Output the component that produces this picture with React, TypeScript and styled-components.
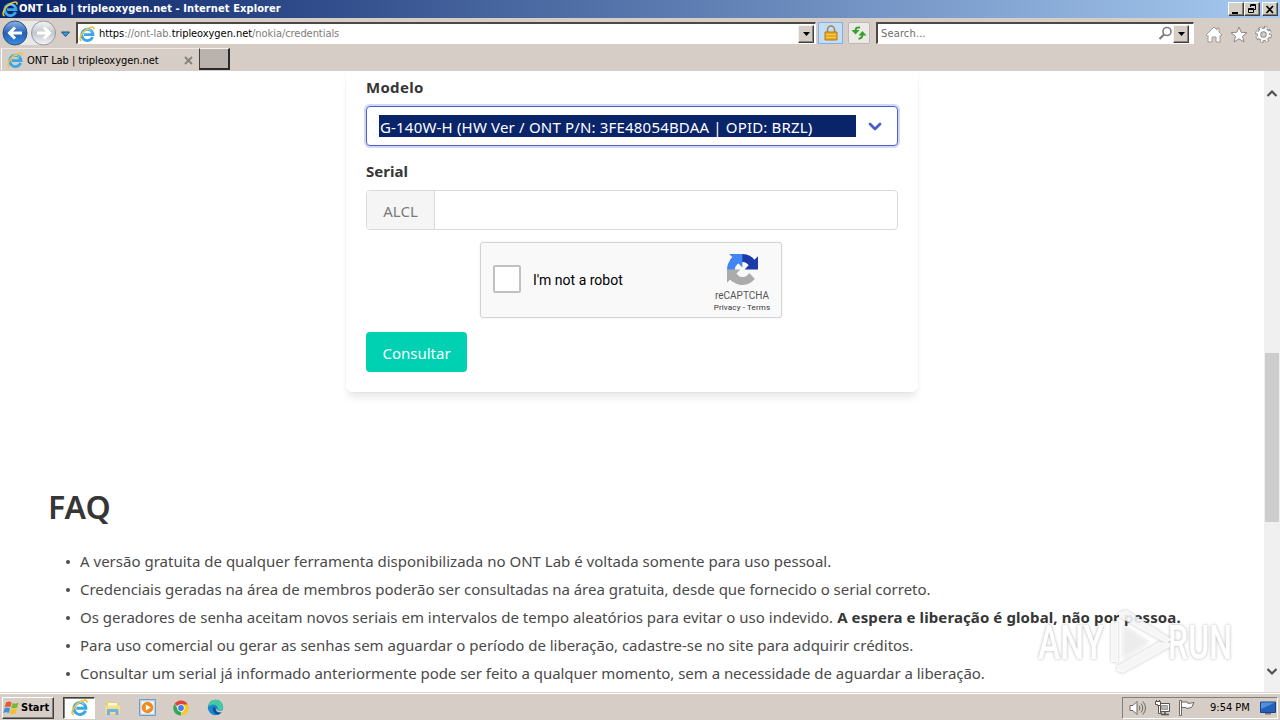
import React from 'react';
import styled, { createGlobalStyle } from 'styled-components';

const ui = '"DejaVu Sans Condensed", "DejaVu Sans", sans-serif';
const face = '#d6cec6';

const Global = createGlobalStyle`
  * { box-sizing: border-box; }
  body { margin: 0; overflow: hidden; background: #fff; }
  button { font: inherit; }
`;

const Screen = styled.div`
  position: relative;
  width: 1280px;
  height: 720px;
  display: flex;
  flex-direction: column;
  overflow: hidden;
  font-family: ${ui};
  font-size: 11px;
  color: #000;
`;

const Spaced = styled.span<{ $ls?: number }>`
  letter-spacing: ${p => p.$ls ?? 0}px;
  white-space: nowrap;
`;

const TitleBar = styled.header`
  flex: none;
  height: 18px;
  display: flex;
  align-items: center;
  padding: 0 2px 0 2px;
  background: linear-gradient(90deg, #0a246a, #a6caf0);
  color: #fff;
  font-weight: 700;
`;

const Title = styled.div`
  flex: 1;
  padding-left: 1px;
  line-height: 18px;
`;

const CaptionButton = styled.button<{ $gap?: number }>`
  width: 16px;
  height: 14px;
  margin: 0 0 0 ${p => p.$gap ?? 0}px;
  padding: 0;
  display: flex;
  align-items: center;
  justify-content: center;
  border: 1px solid;
  border-color: #fff #404040 #404040 #fff;
  box-shadow: inset -1px -1px #808080;
  background: #d4d0c8;
`;

const NavBar = styled.nav`
  flex: none;
  height: 30px;
  display: flex;
  align-items: center;
  padding: 0 8px 0 2px;
  background: ${face};
`;

const AddressBox = styled.div<{ $w: number; $pad: number; $ml?: number; $end?: number }>`
  width: ${p => p.$w}px;
  height: 22px;
  margin-left: ${p => p.$ml ?? 0}px;
  padding: 0 ${p => p.$end ?? 1}px 0 ${p => p.$pad}px;
  display: flex;
  align-items: center;
  border: solid #fff;
  border-width: 2px 1px 1px 2px;
  border-top-color: #4e4842;
  border-left-color: #4e4842;
  background: #fff;
`;

const Url = styled.div`
  flex: 1;
  padding-left: 4px;
  color: #7c7c7c;
  b { font-weight: 400; color: #000; }
`;

const DropButton = styled.button`
  width: 16px;
  height: 18px;
  padding: 0;
  display: flex;
  align-items: center;
  justify-content: center;
  border: 1px solid;
  border-color: #f4f0ec #404040 #404040 #f4f0ec;
  box-shadow: inset -1px -1px #8a847c;
  background: ${face};
`;

const ToolButton = styled.button<{ $on?: boolean; $w: number; $ml: number }>`
  width: ${p => p.$w}px;
  height: 22px;
  margin: 0 0 0 ${p => p.$ml}px;
  padding: 0;
  display: flex;
  align-items: center;
  justify-content: center;
  border: 1px solid ${p => (p.$on ? '#7fb0e6' : '#bdb8b2')};
  border-radius: ${p => (p.$on ? 0 : 2)}px;
  background: ${p => (p.$on ? '#c4dcf6' : '#ece9e6')};
`;

const SearchHint = styled.div`
  flex: 1;
  color: #6d6d6d;
`;

const Actions = styled.div`
  flex: 1;
  display: flex;
  justify-content: flex-end;
  gap: 7px;
  padding-top: 3px;
`;

const TabStrip = styled.div`
  flex: none;
  height: 23px;
  display: flex;
  align-items: flex-start;
  background: ${face};
`;

const Tab = styled.div`
  width: 198px;
  height: 22px;
  margin-left: 1px;
  padding: 1px 6px 0 5px;
  display: flex;
  align-items: center;
  border-left: 1px solid #fff;
  border-top: 1px solid #eeeae6;
`;

const TabLabel = styled.div`
  flex: 1;
  padding-left: 4px;
`;

const NewTab = styled.div`
  width: 31px;
  height: 22px;
  border: 1px solid;
  border-width: 1px 2px 2px 1px;
  border-color: #f6f4f2 #2c2a28 #2c2a28 #403c38;
  background: #bab3ad;
`;

const Viewport = styled.main`
  flex: 1;
  min-height: 0;
  display: flex;
  background: #fff;
`;

const Page = styled.div`
  flex: 1;
  overflow: hidden;
  font-family: "Noto Sans", sans-serif;
  font-size: 15px;
  line-height: 24px;
  color: #4a4a4a;
`;

const Card = styled.div`
  width: 572px;
  height: 321px;
  margin: 0 auto;
  padding: 4px 20px 20px;
  border-radius: 0 0 6px 6px;
  box-shadow: 0 8px 8px -3px rgba(10, 10, 10, 0.1), 0 0 0 1px rgba(10, 10, 10, 0.02);
`;

const Label = styled.div`
  height: 31px;
  line-height: 25px;
  color: #363636;
  font-weight: 700;
`;

const Select = styled.div`
  height: 40px;
  margin-bottom: 13px;
  padding: 0 15px 0 12px;
  display: flex;
  align-items: center;
  justify-content: space-between;
  border: 1px solid #485fc7;
  border-radius: 4px;
  box-shadow: 0 0 0 2px rgba(72, 95, 199, 0.25);
`;

const Selected = styled.div`
  width: 477px;
  height: 22px;
  padding-left: 1px;
  line-height: 24px;
  background: #0a246a;
  color: #fff;
`;

const InputGroup = styled.div`
  height: 40px;
  display: flex;
  border: 1px solid #dbdbdb;
  border-radius: 4px;
  overflow: hidden;
`;

const Addon = styled.div`
  width: 68px;
  border-right: 1px solid #dbdbdb;
  background: #f5f5f5;
  color: #7a7a7a;
  line-height: 41px;
  text-align: center;
`;

const Captcha = styled.div`
  width: 302px;
  height: 76px;
  margin: 12px 0 14px 114px;
  padding: 0 10px 0 12px;
  display: flex;
  align-items: center;
  border: 1px solid #d3d3d3;
  border-radius: 3px;
  background: #f9f9f9;
  box-shadow: 0 0 3px rgba(0, 0, 0, 0.08);
  font-family: Roboto, sans-serif;
`;

const Check = styled.div`
  width: 28px;
  height: 28px;
  margin-top: -2px;
  border: 2px solid #c1c1c1;
  border-radius: 2px;
  background: #fff;
`;

const CaptchaText = styled.div`
  flex: 1;
  padding-left: 12px;
  font-size: 14px;
  color: #000;
`;

const Brand = styled.div`
  width: 58px;
  padding-top: 6px;
  display: flex;
  flex-direction: column;
  align-items: center;
  color: #555;
  font-size: 10px;
  line-height: 12px;
  white-space: nowrap;
  svg { margin-bottom: 5px; }
  small { font-size: 8px; line-height: 11px; color: #333; letter-spacing: 0.15px; }
`;

const Submit = styled.button`
  display: block;
  width: 101px;
  height: 40px;
  padding: 2px 0 0;
  border: 0;
  border-radius: 4px;
  background: #00d1b2;
  color: #fff;
`;

const Faq = styled.section`
  padding: 91px 0 0 48px;
`;

const Heading = styled.h1`
  margin: 0 0 16px;
  font-size: 32px;
  line-height: 48px;
  font-weight: 600;
  color: #363636;
`;

const List = styled.ul`
  margin: 0;
  padding: 0 0 0 16px;
  list-style: none;
`;

const Item = styled.li`
  height: 28px;
  display: flex;
  align-items: center;
  &::before {
    content: '';
    width: 4px;
    height: 4px;
    margin: 2px 10px 0 2px;
    border-radius: 50%;
    background: #4a4a4a;
  }
`;

const Strong = styled.b`
  margin-left: 4px;
  color: #363636;
`;

const ScrollBar = styled.div`
  width: 16px;
  display: flex;
  flex-direction: column;
  align-items: center;
  background: #f0f0f0;
  padding: 18px 0 16px;
`;

const Thumb = styled.div`
  width: 14px;
  height: 169px;
  margin: 255px 0 auto;
  background: #cdcdcd;
`;

const TaskBar = styled.footer`
  flex: none;
  height: 28px;
  display: flex;
  align-items: center;
  padding: 2px 2px 0 2px;
  border-top: 1px solid #d9d4ce;
  box-shadow: inset 0 1px #fff;
  background: ${face};
`;

const Start = styled.button`
  width: 52px;
  height: 22px;
  padding: 0;
  display: flex;
  align-items: center;
  gap: 1px;
  border: 1px solid;
  border-color: #fff #404040 #404040 #fff;
  box-shadow: inset -1px -1px #808080;
  background: ${face};
  font-weight: 700;
`;

const TaskButton = styled.div<{ $active?: boolean }>`
  width: ${p => (p.$active ? 32 : 34)}px;
  height: 22px;
  display: flex;
  align-items: center;
  justify-content: center;
  ${p => p.$active && `
    margin: 0 1px 0 9px;
    border: 1px solid;
    border-color: #404040 #fff #fff #404040;
    box-shadow: inset 1px 1px #808080;
    background: #fff;
  `}
`;

const Tray = styled.div`
  width: 156px;
  height: 22px;
  margin-left: auto;
  padding-left: 6px;
  display: flex;
  align-items: center;
  gap: 7px;
  border: 1px solid;
  border-color: #808080 #fff #fff #808080;
`;

const Clock = styled.div`
  margin-left: 8px;
  margin-right: 3px;
`;

const Watermark = styled.svg`
  position: absolute;
  left: 1030px;
  top: 604px;
  overflow: visible;
  filter: drop-shadow(0 0 1.5px rgba(0, 0, 0, 0.3));
`;

const IeLogo = ({ size = 16 }: { size?: number }) => (
  <svg width={size} height={size} viewBox="0 0 16 16" fill="none">
    <path d="M13.6 11A5.600 5.600 0 1 1 14 8.700H5" stroke="#3aa6e6" strokeWidth="2.800" />
    <path d="M12.500 5A5 5 0 0 0 4.200 6.400" stroke="#9ddcf8" strokeWidth="1" />
    <path d="M2.600 14.800C-1.200 14 2.600 6.600 7.600 3.200 11.400.6 15.800-.2 14.800 3.600" stroke="#f0c433" strokeWidth="1.600" />
  </svg>
);

const Down = () => (
  <svg width="7" height="4" viewBox="0 0 7 4"><path d="M0 0h7L3.500 4z" fill="#000" /></svg>
);

const NavArrows = () => (
  <svg width="74" height="28" viewBox="0 0 74 28" fill="none">
    <defs>
      <linearGradient id="back" x2="0" y2="1">
        <stop stopColor="#8db4e6" /><stop offset=".5" stopColor="#2560b8" /><stop offset="1" stopColor="#3a8ee0" />
      </linearGradient>
      <linearGradient id="fwd" x2="0" y2="1">
        <stop stopColor="#f4f5f6" /><stop offset=".5" stopColor="#c3c7cc" /><stop offset="1" stopColor="#f4f7fa" />
      </linearGradient>
    </defs>
    <path d="M13 2h28v24H13z" fill="#e9e8e8" />
    <circle cx="13" cy="14" r="12" fill="url(#back)" stroke="#36506f" />
    <circle cx="41.500" cy="14" r="12" fill="url(#fwd)" stroke="#9297a0" />
    <path d="M20 14H8M13 8.500L7.500 14l5.500 5.500" stroke="#fff" strokeWidth="3" />
    <path d="M35 14h12M42 8.500l5.500 5.500-5.500 5.500" stroke="#fff" strokeWidth="3" />
    <path d="M59.500 13h8l-4 4.500z" fill="#3d9be0" stroke="#1d4f86" />
  </svg>
);

const ScrollArrow = ({ up }: { up?: boolean }) => (
  <svg width="12" height="9" viewBox="0 0 12 9" fill="none">
    <path d={up ? 'M1.500 7L6 2.500 10.500 7' : 'M1.500 2L6 6.500 10.500 2'} stroke="#505050" strokeWidth="2.200" />
  </svg>
);

const Recaptcha = () => (
  <svg width="31" height="31" viewBox="0 0 64 64">
    <path d="M64 31.960c0-.460-.010-.920-.030-1.370V4.550l-7.200 7.200C50.880 4.540 41.920 0 31.910 0 21.490 0 12.230 4.970 6.390 12.660l11.800 11.920a15.600 15.600 0 0 1 4.780-5.360c2.060-1.610 4.980-2.930 8.940-2.930.480 0 .850.060 1.120.160 4.910.390 9.160 3.090 11.660 7.020l-8.350 8.350z" fill="#1c3aa9" />
    <path d="M31.860 0h-1.370H4.450l7.200 7.200C4.440 13.090 0 21.950 0 31.960c0 10.420 4.870 19.780 12.560 25.620l11.920-11.800a15.600 15.600 0 0 1-5.360-4.780c-1.610-2.060-2.930-4.980-2.930-8.940 0-.480.060-.850.160-1.120.390-4.910 3.090-9.160 7.020-11.660l8.350 8.350z" fill="#4285f4" />
    <path d="M0 31.960v27.410l7.200-7.200C13.090 59.380 21.950 64 31.960 64c10.420 0 19.680-4.970 25.520-12.660l-11.800-11.920a15.600 15.600 0 0 1-4.780 5.360c-2.060 1.610-4.980 2.930-8.940 2.930-.480 0-.850-.060-1.120-.160-4.910-.390-9.160-3.090-11.660-7.020l8.350-8.350z" fill="#ababab" />
  </svg>
);

const faq: { text: string; ls: number; strong?: string }[] = [
  { text: 'A versão gratuita de qualquer ferramenta disponibilizada no ONT Lab é voltada somente para uso pessoal.', ls: 0.007 },
  { text: 'Credenciais geradas na área de membros poderão ser consultadas na área gratuita, desde que fornecido o serial correto.', ls: -0.02 },
  { text: 'Os geradores de senha aceitam novos seriais em intervalos de tempo aleatórios para evitar o uso indevido.', ls: 0.005, strong: 'A espera e liberação é global, não por pessoa.' },
  { text: 'Para uso comercial ou gerar as senhas sem aguardar o período de liberação, cadastre-se no site para adquirir créditos.', ls: -0.015 },
  { text: 'Consultar um serial já informado anteriormente pode ser feito a qualquer momento, sem a necessidade de aguardar a liberação.', ls: -0.033 },
];

export default function App() {
  return (
    <Screen>
      <Global />
      <TitleBar>
        <IeLogo />
        <Title><Spaced $ls={0.1}>ONT Lab | tripleoxygen.net - Internet Explorer</Spaced></Title>
        <CaptionButton><svg width="10" height="9"><path d="M1 7h6v2H1z" /></svg></CaptionButton>
        <CaptionButton>
          <svg width="10" height="10" fill="none" stroke="#000"><path d="M3.500 3V.500h5v5H7M3 1.500h6M1.500 4.500h5v4h-5zM1 5.500h6" /></svg>
        </CaptionButton>
        <CaptionButton $gap={2}><svg width="10" height="9" stroke="#000" strokeWidth="1.700"><path d="M1.500 1l6.500 7M8 1L1.500 8" /></svg></CaptionButton>
      </TitleBar>

      <NavBar>
        <NavArrows />
        <AddressBox $w={740} $pad={1}>
          <IeLogo />
          <Url><Spaced $ls={-0.055}><b>https</b>://ont-lab.<b>tripleoxygen.net</b>/nokia/credentials</Spaced></Url>
          <DropButton><Down /></DropButton>
        </AddressBox>
        <ToolButton $on $w={25} $ml={2}>
          <svg width="14" height="16" viewBox="0 0 14 16" fill="none">
            <path d="M3.500 8V4.500a3.500 3.500 0 0 1 7 0V8" stroke="#a4884a" strokeWidth="1.600" />
            <path d="M1 7h12v8H1z" fill="#e7a91c" stroke="#b57c12" />
            <path d="M2 9.500h10M2 12.500h10" stroke="#f7cf58" />
          </svg>
        </ToolButton>
        <ToolButton $w={22} $ml={5}>
          <svg width="16" height="14" viewBox="0 0 16 14" fill="none" stroke="#35a02c" strokeWidth="2">
            <path d="M9 1.500C5.500 1 4.500 2 4.500 5" /><path d="M.500 4h8l-4 4.500z" fill="#35a02c" stroke="none" />
            <path d="M7.500 12.700c3 0 4-1.500 4-4.700" /><path d="M7.500 9.500h8l-4-4.500z" fill="#35a02c" stroke="none" />
          </svg>
        </ToolButton>
        <AddressBox $w={318} $pad={3} $ml={6} $end={4}>
          <SearchHint><Spaced $ls={0.15}>Search...</Spaced></SearchHint>
          <svg width="15" height="15" viewBox="0 0 15 15" fill="none" stroke="#7d7d7d">
            <circle cx="9" cy="5.500" r="4" strokeWidth="1.600" /><path d="M6 8.500L1.500 13" strokeWidth="2.200" />
          </svg>
          <DropButton><Down /></DropButton>
        </AddressBox>
        <Actions>
          <svg width="18" height="17" viewBox="0 0 18 17" fill="#fff" stroke="#a09a94"><path d="M1 9l8-8 3 3V2h2v4l3 3-1.500 1L15 9.500V16h-4v-5H7v5H3V9.500L2.500 10z" /></svg>
          <svg width="18" height="17" viewBox="0 0 18 17" fill="#fff" stroke="#8f8a86"><path d="M9 1l2.200 5.300 5.800.300-4.500 3.700L14 16l-5-3.200L4 16l1.500-5.700L1 6.600l5.800-.300z" /></svg>
          <svg width="17" height="17" viewBox="0 0 17 17" fill="none">
            <circle cx="8.500" cy="8.500" r="6.700" stroke="#8f8a86" strokeWidth="3.400" strokeDasharray="3.300 1.962" />
            <circle cx="8.500" cy="8.500" r="4.500" stroke="#8f8a86" strokeWidth="4.400" />
            <circle cx="8.500" cy="8.500" r="6.400" stroke="#fff" strokeWidth="2.400" strokeDasharray="1.900 3.127" strokeDashoffset="-.6" />
            <circle cx="8.500" cy="8.500" r="4.500" stroke="#fff" strokeWidth="2.600" />
          </svg>
        </Actions>
      </NavBar>

      <TabStrip>
        <Tab>
          <IeLogo />
          <TabLabel><Spaced $ls={-0.06}>ONT Lab | tripleoxygen.net</Spaced></TabLabel>
          <svg width="9" height="9" stroke="#87817b" strokeWidth="1.800"><path d="M1 1l7 7M8 1L1 8" /></svg>
        </Tab>
        <NewTab />
      </TabStrip>

      <Viewport>
        <Page>
          <Card>
            <Label><Spaced $ls={0.3}>Modelo</Spaced></Label>
            <Select>
              <Selected><Spaced $ls={0.18}>G-140W-H (HW Ver / ONT P/N: 3FE48054BDAA | OPID: BRZL)</Spaced></Selected>
              <svg width="14" height="9" viewBox="0 0 14 9" fill="none"><path d="M2 2l5 5 5-5" stroke="#485fc7" strokeWidth="2.800" strokeLinecap="round" strokeLinejoin="round" /></svg>
            </Select>
            <Label><Spaced>Serial</Spaced></Label>
            <InputGroup><Addon><Spaced>ALCL</Spaced></Addon></InputGroup>
            <Captcha>
              <Check />
              <CaptchaText><Spaced>I'm not a robot</Spaced></CaptchaText>
              <Brand><Recaptcha /><Spaced>reCAPTCHA</Spaced><small>Privacy - Terms</small></Brand>
            </Captcha>
            <Submit><Spaced>Consultar</Spaced></Submit>
          </Card>
          <Faq>
            <Heading>FAQ</Heading>
            <List>
              {faq.map(f => (
                <Item key={f.text}>
                  <Spaced $ls={f.ls}>{f.text}</Spaced>
                  {f.strong && <Strong><Spaced $ls={0.1}>{f.strong}</Spaced></Strong>}
                </Item>
              ))}
            </List>
          </Faq>
        </Page>
        <ScrollBar><ScrollArrow up /><Thumb /><ScrollArrow /></ScrollBar>
      </Viewport>

      <TaskBar>
        <Start>
          <svg width="17" height="16" viewBox="0 0 17 16">
            <path d="M3 2.500Q6 .500 8.500 2.500L7.300 7.300Q5 5.800 1.800 7.300z" fill="#e8582a" />
            <path d="M9.500 3Q12.500 4.500 15.500 2.500L14.200 7.500Q11.500 9 8.300 7.700z" fill="#7cb832" />
            <path d="M1.500 8.400Q4.500 6.800 7 8.400L5.800 13Q3 11.500.300 13z" fill="#3f8fdc" />
            <path d="M8 8.800Q11 10 14 8.500L12.700 13.300Q10 15 6.800 13.500z" fill="#f6bf26" />
          </svg>
          <Spaced>Start</Spaced>
        </Start>
        <TaskButton $active><IeLogo size={17} /></TaskButton>
        <TaskButton>
          <svg width="18" height="18" viewBox="0 0 18 18">
            <path d="M2 3l4-1 1 1.500h8V15H2z" fill="#e8cf72" /><path d="M4 4h9v4H4z" fill="#fff8d8" />
            <path d="M1.500 6.500h14.500V15H1.500z" fill="#f3de92" /><path d="M3 16v-5q0-1 1-1h9.500q1 0 1 1v5h-3v-3H6v3z" fill="#6fb4dc" />
          </svg>
        </TaskButton>
        <TaskButton>
          <svg width="17" height="17" viewBox="0 0 17 17">
            <path d="M.500.500h16v16H.500z" fill="#b9d5ee" stroke="#6f9cc8" /><path d="M2.500 2.500h12v12h-12z" fill="#fff" />
            <circle cx="8.500" cy="8.500" r="5.800" fill="#f08a1d" /><path d="M6.800 5.500l5 3-5 3z" fill="#fff" />
          </svg>
        </TaskButton>
        <TaskButton>
          <svg width="16" height="16" viewBox="0 0 16 16">
            <path d="M8 8L1.500 4A7.500 7.500 0 0 1 14.600 4.500z" fill="#e04434" /><path d="M8 8h-.500L8 15.500A7.500 7.500 0 0 1 1.500 4L5 9.500z" fill="#35a552" />
            <path d="M8 4.500h6.700A7.500 7.500 0 0 1 8 15.500L11 9.800z" fill="#fbc91c" /><circle cx="8" cy="8" r="3.700" fill="#fff" /><circle cx="8" cy="8" r="2.900" fill="#3f7fe8" />
          </svg>
        </TaskButton>
        <TaskButton>
          <svg width="17" height="17" viewBox="0 0 17 17">
            <circle cx="8.500" cy="8.500" r="7.700" fill="#1b86d0" /><path d="M2 4.500a7.700 7.700 0 0 1 14.200 4.200c0 2.500-4 3.300-5.700 1.600 1-2.700-1-4.600-3.500-4.600-2 0-4 .300-5.500 2z" fill="#44c9a0" />
            <path d="M6.500 8c-1.500 3 .500 7.500 5 7.500l3.500-2c-4.500 1-7-1.500-6.500-4.500z" fill="#0d4f93" /><path d="M9 9.500c1.500 2.700 5 2.600 7.500 1.200l-1.500 2.300c-3.500.800-6.500-.500-6-3.500z" fill="#d6cec6" />
          </svg>
        </TaskButton>
        <Tray>
          <svg width="18" height="16" viewBox="0 0 18 16" fill="none" stroke="#6c6762">
            <path d="M1 5.500h3l4-4v13l-4-4H1z" fill="#fff" /><path d="M10 5.500q2 2.500 0 5M12 3.500q3.500 4.500 0 9M14 1.500q5 6.500 0 13" />
          </svg>
          <svg width="17" height="16" viewBox="0 0 17 16" fill="none" stroke="#57524e">
            <path d="M5.500 3.500h10v8h-10z" fill="#fff" /><path d="M7.500 5.500h6v4h-6z" fill="#b8b4b0" stroke="#999" /><path d="M7 14.500h8M11 12v2" strokeWidth="1.500" />
            <path d="M1.500 1.500h5v4h-2v8h3v-1h-1v-7h-3v-1h-2z" fill="#fff" /><path d="M2.500 0v2M5.500 0v2" />
          </svg>
          <svg width="17" height="16" viewBox="0 0 17 16" fill="#fff" stroke="#6c6762"><path d="M1.500.500h2v15h-2zM3.500 2h6l.500 1.500 6-1-2.500 5-5 1-.500-1h-4.500z" /></svg>
          <Clock><Spaced>9:54 PM</Spaced></Clock>
          <svg width="16" height="14" viewBox="0 0 16 14"><path d="M.500 1h15v10.500H.500z" fill="#2462ba" stroke="#1c447f" /><path d="M1 1.500h14L1 8z" fill="#4f90dc" /><path d="M5 12h6v1.500H5z" fill="#777" /></svg>
        </Tray>
      </TaskBar>

      <Watermark width="210" height="76" viewBox="0 0 210 76" fill="#fff" fontFamily="Roboto, sans-serif" fontSize="49" fontWeight="500">
        <text x="8" y="55" textLength="66" lengthAdjust="spacingAndGlyphs">ANY</text>
        <g opacity=".85">
          <path d="M81 17h7v41h-7z" />
          <path d="M89 8l7-2 45 29-4 5L89 13z" />
          <path d="M93 21l26 17-26 17z" opacity=".6" />
          <path d="M87 62l42-24 11 1v4L93 69l-6-2z" />
        </g>
        <text x="138" y="55" textLength="64" lengthAdjust="spacingAndGlyphs">RUN</text>
      </Watermark>
    </Screen>
  );
}
